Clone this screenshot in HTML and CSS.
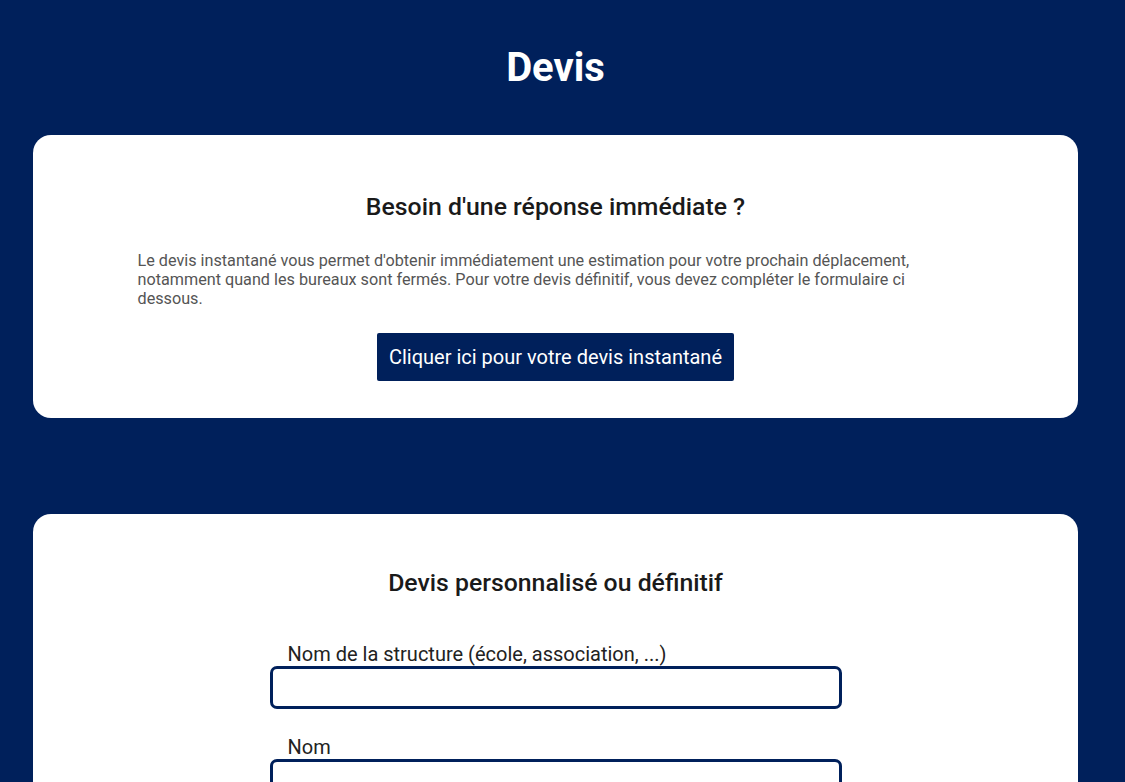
FILE: index.html
```html
<!DOCTYPE html>
<html lang="fr">
<head>
<meta charset="utf-8">
<title>Devis</title>
<link rel="stylesheet" href="styles.css">
</head>
<body>
<main class="page">
  <h1 class="page-title">Devis</h1>
  <section class="card card-instant">
    <h2 class="card-title">Besoin d'une réponse immédiate ?</h2>
    <p class="card-text">Le devis instantané vous permet d'obtenir immédiatement une estimation pour votre prochain déplacement, notamment quand les bureaux sont fermés. Pour votre devis définitif, vous devez compléter le formulaire ci dessous.</p>
    <div class="btn-row"><a class="btn" href="#">Cliquer ici pour votre devis instantané</a></div>
  </section>
  <section class="card card-form">
    <h2 class="card-title">Devis personnalisé ou définitif</h2>
    <form class="form">
      <label class="field">
        <span class="field-label">Nom de la structure (école, association, ...)</span>
        <input class="field-input" type="text">
      </label>
      <label class="field">
        <span class="field-label">Nom</span>
        <input class="field-input" type="text">
      </label>
    </form>
  </section>
</main>
</body>
</html>
```
FILE: styles.css
```css
* { box-sizing: border-box; }
html, body { margin: 0; padding: 0; }
body {
  background: #00205b;
  font-family: Roboto, "Liberation Sans", Arial, sans-serif;
  overflow: hidden;
}
.page {
  margin: 0 47px 0 33px;
  padding-top: 44px;
}
.page-title {
  margin: 0 0 43px;
  text-align: center;
  color: #fff;
  font-size: 40px;
  font-weight: 700;
  line-height: 48px;
}
.card {
  background: #fff;
  border-radius: 18px;
}
.card-instant {
  padding: 57px 0 37px;
  margin-bottom: 96px;
}
.card-title {
  margin: 0;
  text-align: center;
  font-size: 24.8px;
  font-weight: 500;
  line-height: 30px;
  color: #1a1a1a;
}
.card-text {
  margin: 29px 13% 0 10%;
  font-size: 16.2px;
  line-height: 19px;
  color: #555;
}
.btn-row {
  display: flex;
  justify-content: center;
  margin-top: 25px;
}
.btn {
  display: inline-block;
  background: #00205b;
  color: #fff;
  text-decoration: none;
  font-size: 20px;
  line-height: 48px;
  padding: 0 12px;
  border-radius: 2px;
}
.card-form {
  padding: 54px 0 40px;
}
.form {
  width: 572px;
  margin: 44px auto 0;
  display: flex;
  flex-direction: column;
  gap: 26px;
}
.field {
  display: flex;
  flex-direction: column;
}
.field-label {
  padding-left: 18px;
  font-size: 20px;
  line-height: 24px;
  color: #222;
}
.field-input {
  height: 43px;
  border: 3px solid #00205b;
  border-radius: 7px;
  background: #fff;
  font: inherit;
}
```
